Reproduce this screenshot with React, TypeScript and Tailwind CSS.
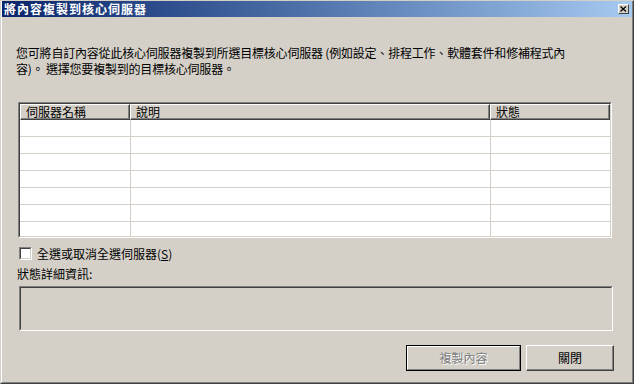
import React from "react";

const font = { fontFamily: '"Noto Sans CJK TC", "Noto Sans", sans-serif' };

function Sunken({ className, children }: { className?: string; children?: React.ReactNode }) {
  return (
    <div className={`border border-t-[#808080] border-l-[#808080] border-b-white border-r-white ${className ?? ""}`}>
      <div className="w-full h-full border border-t-[#404040] border-l-[#404040] border-b-[#d4d0c8] border-r-[#d4d0c8] overflow-hidden">
        {children}
      </div>
    </div>
  );
}

function HeaderCell({ w, label }: { w: string; label: string }) {
  return (
    <div
      className={`${w} h-[16px] shrink-0 bg-[#d4d0c8] border-t border-l border-t-white border-l-white border-b border-r border-b-[#404040] border-r-[#404040] shadow-[inset_-1px_-1px_0_#808080] pl-[5px] text-[12px] leading-[14px] text-black`}
    >
      {label}
    </div>
  );
}

export default function App() {
  const rows = Array.from({ length: 7 });
  return (
    <div className="w-[634px] h-[384px] overflow-hidden" style={font}>
      <div className="w-full h-full bg-[#d4d0c8] border-t border-l border-t-[#d4d0c8] border-l-[#d4d0c8] border-b border-r border-b-[#404040] border-r-[#404040]">
        <div className="w-full h-full flex flex-col border-l border-l-white border-b border-r border-b-[#808080] border-r-[#808080]">
          {/* Title bar */}
          <div className="h-[16px] shrink-0 flex items-center justify-between bg-gradient-to-r from-[#0a246a] to-[#a6caf0]">
            <span className="pl-[2px] text-[12px] leading-[16px] font-bold text-white tracking-[1px]">
              將內容複製到核心伺服器
            </span>
            <div className="mr-[3px] w-[11px] h-[10px] bg-[#d4d0c8] border-t border-l border-t-white border-l-white border-b border-r border-b-[#404040] border-r-[#404040] flex items-center justify-center">
              <svg width="7" height="6" viewBox="0 0 7 6">
                <path d="M0.5 0.5 L6 5.5 M6 0.5 L0.5 5.5" stroke="#000" strokeWidth="1.2" />
              </svg>
            </div>
          </div>

          {/* Description */}
          <p className="mt-[28px] ml-[14px] text-[12px] leading-[16px] tracking-[-0.2px] text-black">
            您可將自訂內容從此核心伺服器複製到所選目標核心伺服器 (例如設定、排程工作、軟體套件和修補程式內
            <br />
            容)。 選擇您要複製到的目標核心伺服器。
          </p>

          {/* Table */}
          <Sunken className="mt-[25px] ml-[16px] w-[594px] h-[136px] shrink-0">
            <div className="flex">
              <HeaderCell w="w-[110px]" label="伺服器名稱" />
              <HeaderCell w="w-[360px]" label="說明" />
              <HeaderCell w="w-[120px]" label="狀態" />
            </div>
            <div className="bg-white">
              {rows.map((_, i) => (
                <div key={i} className="flex h-[17px] border-b border-b-[#d4d0c8]">
                  <div className="w-[110px] shrink-0" />
                  <div className="w-[360px] shrink-0 border-l border-l-[#d4d0c8]" />
                  <div className="w-[120px] shrink-0 border-l border-l-[#d4d0c8]" />
                </div>
              ))}
            </div>
          </Sunken>

          {/* Checkbox */}
          <div className="mt-[9px] ml-[17px] flex items-center h-[13px]">
            <div className="w-[13px] h-[13px] bg-white border border-t-[#808080] border-l-[#808080] border-b-white border-r-white">
              <div className="w-full h-full border border-t-[#404040] border-l-[#404040] border-b-[#d4d0c8] border-r-[#d4d0c8]" />
            </div>
            <span className="ml-[5px] text-[12px] leading-[16px] text-black">
              全選或取消全選伺服器(<span className="underline">S</span>)
            </span>
          </div>

          {/* Status details label */}
          <div className="mt-[6px] ml-[15px] text-[12px] leading-[16px] text-black">狀態詳細資訊:</div>

          {/* Status box */}
          <Sunken className="mt-[4px] ml-[17px] w-[594px] h-[45px] shrink-0" />

          {/* Buttons */}
          <div className="mt-[14px] mr-[18px] flex justify-end gap-[5px]">
            <div className="w-[115px] h-[26px] border border-black">
              <div className="w-full h-full border border-t-white border-l-white border-b-[#808080] border-r-[#808080] flex items-center justify-center">
                <span className="text-[12px] leading-[16px] text-[#808080] [text-shadow:1px_1px_0_#ffffff]">複製內容</span>
              </div>
            </div>
            <div className="w-[88px] h-[26px] border border-t-white border-l-white border-b-[#404040] border-r-[#404040] shadow-[inset_-1px_-1px_0_#808080] flex items-center justify-center">
              <span className="text-[12px] leading-[16px] text-black">關閉</span>
            </div>
          </div>
        </div>
      </div>
    </div>
  );
}
